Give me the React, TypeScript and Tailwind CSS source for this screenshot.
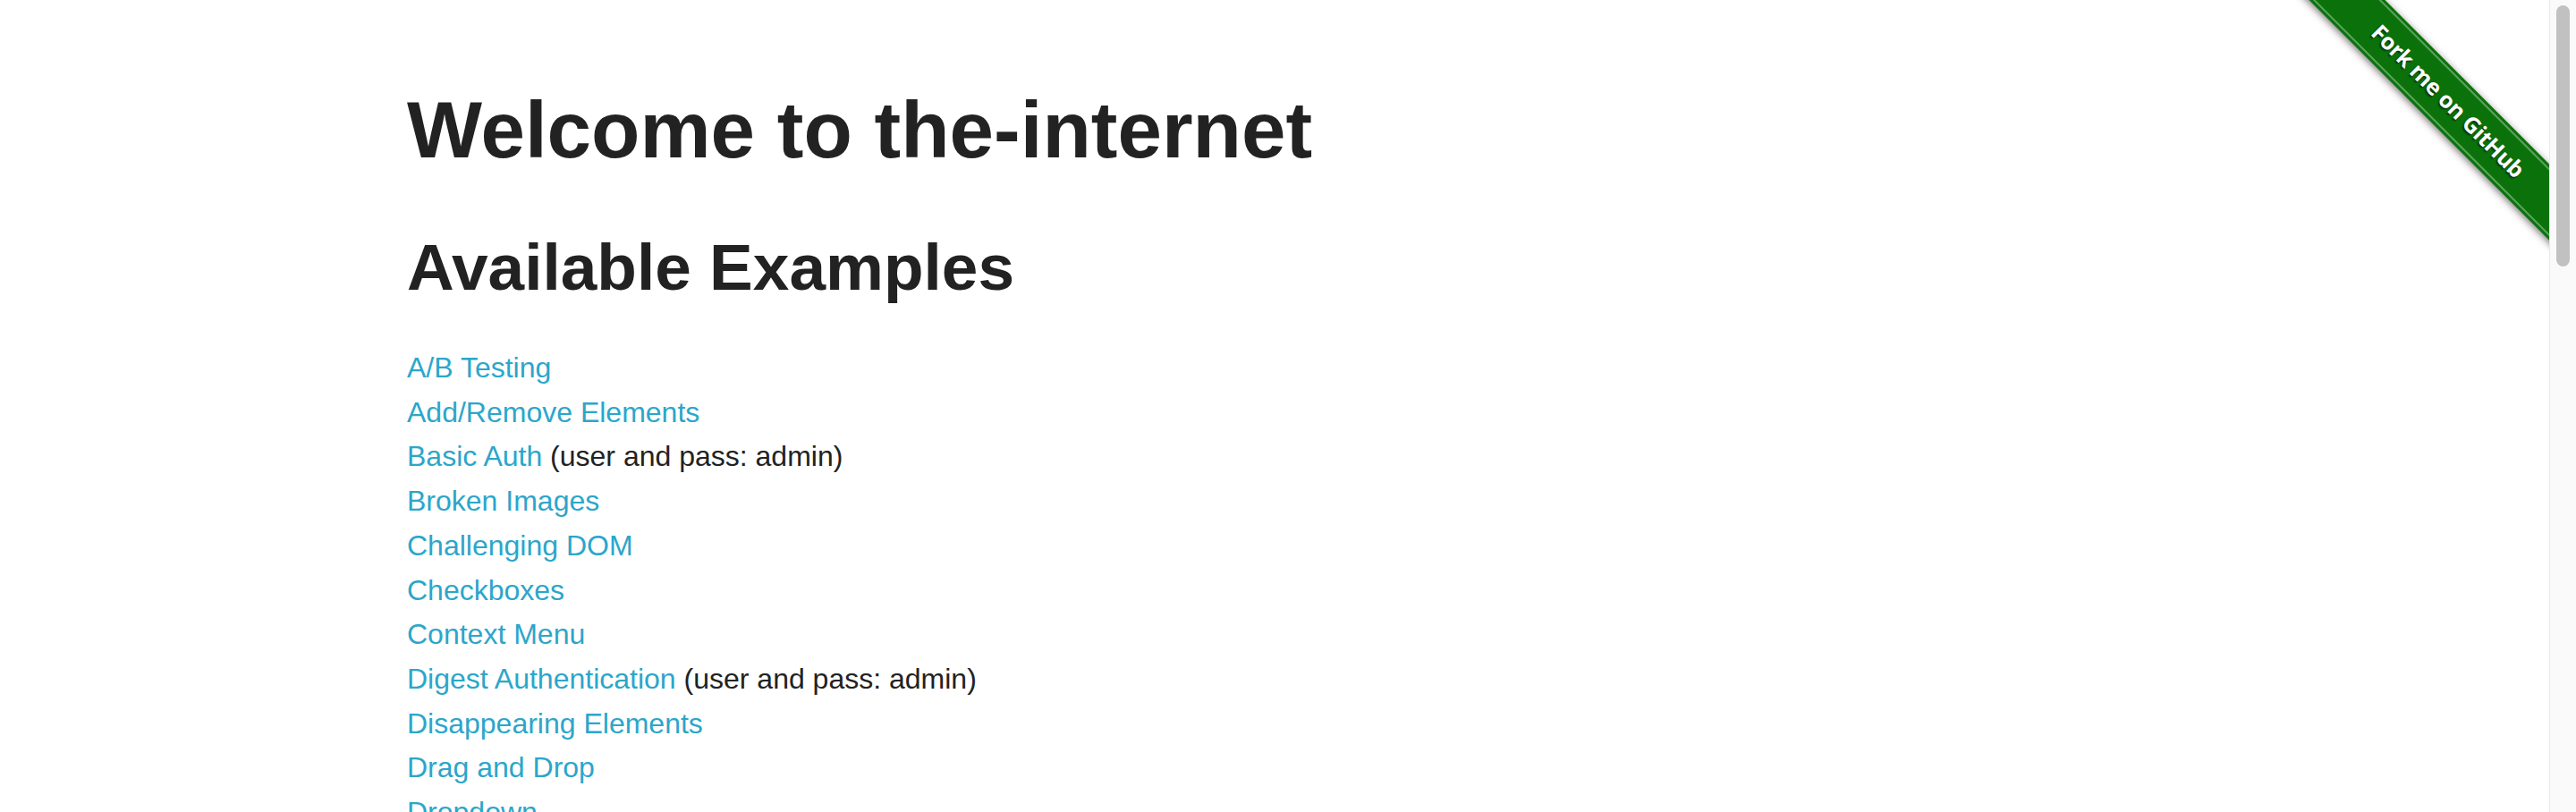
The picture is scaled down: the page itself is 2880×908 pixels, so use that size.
const examples: { label: string; note?: string }[] = [
  { label: 'A/B Testing' },
  { label: 'Add/Remove Elements' },
  { label: 'Basic Auth', note: '(user and pass: admin)' },
  { label: 'Broken Images' },
  { label: 'Challenging DOM' },
  { label: 'Checkboxes' },
  { label: 'Context Menu' },
  { label: 'Digest Authentication', note: '(user and pass: admin)' },
  { label: 'Disappearing Elements' },
  { label: 'Drag and Drop' },
  { label: 'Dropdown' },
]

function ForkRibbon() {
  return (
    <div className="pointer-events-none absolute top-0 right-0 h-[298px] w-[298px] overflow-hidden">
      <a
        href="#"
        className="absolute top-[83px] left-[-25px] flex h-[60px] w-[420px] rotate-45 items-center justify-center bg-[#0b720b] shadow-[0_2px_8px_rgba(0,0,0,0.55)]"
      >
        <span className="absolute inset-x-0 top-[3px] bottom-[3px] border-y-2 border-[#ffffff55]" />
        <span className="relative font-['Open_Sans',sans-serif] text-[25px] font-bold tracking-[-0.3px] text-white [text-shadow:0_2px_2px_rgba(0,0,0,0.6)]">
          Fork me on GitHub
        </span>
      </a>
    </div>
  )
}

export default function App() {
  return (
    <div className="flex h-screen overflow-hidden bg-white font-['Liberation_Sans',Arial,sans-serif] text-[#222222]">
      <div className="relative flex-1 overflow-hidden">
        <div className="mx-auto max-w-[2000px] px-[30px] pt-[101px]">
          <h1 className="text-[89px] leading-[89px] font-bold">Welcome to the-internet</h1>
          <h2 className="mt-[72px] text-[73px] leading-[74px] font-bold">Available Examples</h2>
          <ul className="mt-[51px] text-[32px] leading-[49.7px]">
            {examples.map((ex) => (
              <li key={ex.label}>
                <a href="#" className="text-[#2ba6cb]">
                  {ex.label}
                </a>
                {ex.note && <span> {ex.note}</span>}
              </li>
            ))}
          </ul>
        </div>
        <ForkRibbon />
      </div>
      <div className="w-[30px] shrink-0 border-l border-[#e8e8e8] bg-[#fafafa] px-[7px] pt-[6px]">
        <div className="h-[292px] w-[15px] rounded-full bg-[#c1c1c1]" />
      </div>
    </div>
  )
}
